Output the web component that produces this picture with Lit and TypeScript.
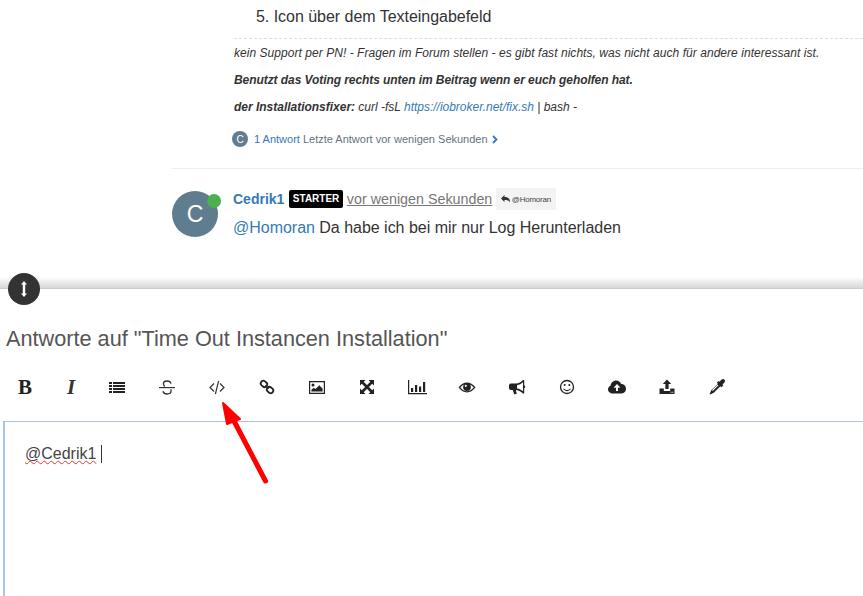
import { LitElement, html, css, svg } from "lit";
import { customElement } from "lit/decorators.js";

const icons = [
  svg`<text x="8" y="15" text-anchor="middle" class="tb">B</text>`,
  svg`<text x="8" y="15" text-anchor="middle" class="ti">I</text>`,
  svg`<path d="M0 3h3v2H0zM4 3h12v2H4zM0 6h3v2H0zM4 6h12v2H4zM0 9h3v2H0zM4 9h12v2H4zM0 12h3v2H0zM4 12h12v2H4z" fill="#222"/>`,
  svg`<path d="M0 8h16v1.200H0z" fill="#333"/><path d="M12 4.600C11.600 3 10 2 8.200 2 6 2 4.400 3 4.400 4.800c0 1 .5 1.900 1.400 2.600M11.700 10.400c.3.500.4.900.4 1.400 0 2-1.700 3.200-4 3.200-2 0-3.600-.8-4.200-2.800" fill="none" stroke="#333" stroke-width="1.300"/>`,
  svg`<path d="M5 4.500 1 8.500l4 4M11 4.500l4 4-4 4M9.600 1.800 6.400 15" fill="none" stroke="#333" stroke-width="1.200"/>`,
  svg`<g fill="none" stroke="#222" stroke-width="2" transform="translate(1 1) scale(.875)"><rect x="0.700" y="1.500" width="7.600" height="6" rx="2.800" transform="rotate(40 4.500 4.500)"/><rect x="7.700" y="8.500" width="7.600" height="6" rx="2.800" transform="rotate(40 11.500 11.500)"/><path d="M6 6.500l4 3.400"/></g>`,
  svg`<path fill-rule="evenodd" d="M0 2h16v13H0zM1.200 3.200v10.600h13.600V3.200z" fill="#222"/><circle cx="4" cy="6" r="1.500" fill="#222"/><path d="M2.400 12.600v-1.800l2.400-2 1.600 1.300 4-3.800 3.200 3.400v2.900z" fill="#222"/>`,
  svg`<path d="M1 1h5.500L1 6.500zM15 1v5.500L9.500 1zM1 15V9.500L6.500 15zM15 15H9.500L15 9.500z" fill="#222"/><path d="M3 3l10 10M13 3 3 13" stroke="#222" stroke-width="2.600"/>`,
  svg`<path d="M-1 1h1.200v13H18v1.200H-1z" fill="#222"/><path d="M2 9h2.200v4H2zM6 6h2.200v7H6zM10 7.500h2.200V13H10zM14 3h2.200v10H14z" fill="#222"/>`,
  svg`<path fill-rule="evenodd" d="M-.500 8.500C2 5.300 5 3.600 8 3.600s6 1.700 8.500 4.900C14 11.700 11 13.400 8 13.400S2 11.700-.500 8.500zM1.300 8.500C3.100 10.700 5.500 12.200 8 12.200s4.900-1.500 6.700-3.700C13.600 7.200 12.400 6.200 11.100 5.500c.5.700.8 1.600.8 2.500a3.900 3.900 0 0 1-7.800 0c0-.9.300-1.800.8-2.500C3.600 6.200 2.400 7.200 1.300 8.500z" fill="#222"/><circle cx="6.800" cy="6.800" r="1.100" fill="#fff"/>`,
  svg`<path fill-rule="evenodd" d="M14 1h1.200v5.200c.6.300 1 .8 1 1.500s-.4 1.200-1 1.500V14.500H14C12 12.700 9.800 11.500 7.500 11c-.5.200-.7.700-.5 1.200l.9 2.200-2.600 1-1.600-4.400H1.800C.8 11 0 10 0 9V6.500C0 5.400.8 4.500 1.800 4.500H7C9.800 4.500 12 3 14 1zM14 3.300C12.300 4.900 10.300 5.900 8 6.200v3.200c2.300.3 4.300 1.300 6 2.900z" fill="#222"/>`,
  svg`<circle cx="8" cy="8" r="6.500" fill="none" stroke="#222" stroke-width="1.300"/><circle cx="5.700" cy="6" r="1" fill="#222"/><circle cx="10.300" cy="6" r="1" fill="#222"/><path d="M4.500 9.700c1 1.400 2.100 1.900 3.500 1.900s2.500-.5 3.500-1.900" fill="none" stroke="#222" stroke-width="1.100"/>`,
  svg`<path fill-rule="evenodd" d="M3.800 14.500C1.300 14.500-1 12.800-1 10.300-1 8.600 0 7.300 1.500 6.700 1.800 4 4.300 1.500 7.200 1.500c2.200 0 4.100 1.300 5 3.500 2.800-.1 4.800 2.100 4.800 4.700 0 2.700-2.200 4.800-5 4.800zM8 5 4.600 8.800H7V12h2V8.800h2.400z" fill="#222"/>`,
  svg`<path d="M8 .5l4.200 4.400H9.600v5.100H6.400V4.900H3.800z" fill="#222"/><path fill-rule="evenodd" d="M.5 9.500h4.300V12h6.400V9.500h4.300V15H.5zM11.500 12.800v1h1v-1zM13.300 12.800v1h1v-1z" fill="#222"/>`,
  svg`<path d="M15.400.6c-.8-.8-2-.8-2.800 0L10.400 2.800 9.500 2 7.800 3.700l1 1L2.300 11.200c-.3.300-.5.700-.5 1.200L.6 14.800l.6.600 2.400-1.200c.5 0 .9-.2 1.200-.5l6.500-6.500 1 1L14.400 6.500l-.9-.9 1.900-2.200c.8-.8.800-2 0-2.800z" fill="#222"/><path d="M9.500 6.200 4 11.700h-.9v-.7l5.500-5.500z" fill="#fff"/>`,
];

@customElement("app-root")
export class AppRoot extends LitElement {
  static styles = css`
    :host { display: block; width: 863px; height: 596px; overflow: hidden; position: relative; background: #fff;
      font-family: "Liberation Sans", Arial, sans-serif; color: #333; }
    a { color: #337ab7; text-decoration: none; }
    .thread { height: 277px; padding-left: 172px; box-sizing: border-box; overflow: hidden; }
    .content { padding-left: 62px; }
    .li { font-size: 16px; line-height: 18px; padding: 8px 0 0 22px; height: 30px; box-sizing: border-box; color: #333; letter-spacing: -0.03px; }
    .sig { border-top: 1px dashed #ddd; margin-top: 8px; font-size: 12px; font-style: italic; color: #333; }
    .sig p { margin: 0; line-height: 17px; height: 27px; white-space: nowrap; }
    .sig p:first-child { padding-top: 6px; height: 33px; box-sizing: border-box; letter-spacing: 0.045px; }
    .sig p:nth-child(2) { letter-spacing: -0.07px; }
    .sig p:nth-child(3) { letter-spacing: -0.015px; }
    .replies { display: flex; align-items: center; gap: 4px; margin: 5px 0 0 -2px; height: 16px; font-size: 11px; color: #64727e; white-space: nowrap; }
    .replies span:nth-child(2) { margin-left: 2px; }
    .mini { width: 16px; height: 16px; border-radius: 50%; background: #5f7d8e; color: #fff; font-size: 10px; font-weight: 400; display: flex; align-items: center; justify-content: center; }
    hr { margin: 21px 0 0; border: 0; border-top: 1px solid #eee; }
    .post { display: flex; gap: 15px; margin-top: 22px; }
    .avatar { position: relative; width: 46px; height: 46px; border-radius: 50%; background: #5f7d8e; color: #fff; font-size: 23px; display: flex; align-items: center; justify-content: center; flex: none; }
    .dot { position: absolute; top: 3px; right: -3px; width: 14px; height: 14px; border-radius: 50%; background: #4caf50; }
    .meta { display: flex; align-items: center; height: 22px; margin-top: -3px; white-space: nowrap; }
    .name { font-size: 14px; font-weight: 700; color: #337ab7; }
    .badge { background: #000; color: #fff; font-size: 10px; font-weight: 700; border-radius: 2px; padding: 0 3.500px; height: 18px; line-height: 18px; margin: 0 4px 0 5px; }
    .time { font-size: 14.300px; color: #777; text-decoration: underline; }
    .to { display: flex; align-items: center; gap: 2px; background: #f3f3f3; height: 22px; padding: 0 5px; margin-left: 3.500px; font-size: 8px; letter-spacing: -0.25px; color: #444; }
    .text { font-size: 16px; line-height: 18px; margin-top: 9px; white-space: nowrap; color: #333; letter-spacing: -0.02px; }
    .composer { position: relative; }
    .bar { height: 11px; background: linear-gradient(#fff, #d6d6d6); border-bottom: 1px solid #ccc; }
    .handle { position: absolute; left: 8px; top: -4px; width: 32px; height: 32px; border-radius: 50%; background: #333; display: flex; align-items: center; justify-content: center; }
    h1 { margin: 0; padding: 38px 0 0 6px; font-size: 21.700px; line-height: 24px; font-weight: 400; color: #555; white-space: nowrap; }
    .toolbar { display: flex; margin-top: 20px; padding-left: 2px; height: 32px; align-items: center; }
    .tool { width: 50px; flex: none; display: flex; justify-content: center; }
    .tool.narrow { width: 46px; }
    .tool.gapped { margin-right: 2px; }
    .tool svg { width: 16px; height: 16px; overflow: visible; }
    .tb { font: 700 21px "Liberation Serif", serif; fill: #222; }
    .ti { font: italic 700 21px "Liberation Serif", serif; fill: #333; }
    .editor { margin: 18px 0 0 3px; height: 200px; box-sizing: border-box; border-top: 1px solid #a9c3ec; border-left: 2px solid #a9c3ec; padding: 23px 0 0 20px; font-size: 16px; line-height: 18px; color: #444; }
    .mention { text-decoration: underline wavy #e33; text-decoration-thickness: 1px; text-underline-offset: 1px; text-decoration-skip-ink: none; }
    .caret { display: inline-block; width: 1px; height: 18px; background: #333; margin-left: 5px; vertical-align: top; }
    .arrow { position: absolute; left: 215px; top: 395px; width: 60px; height: 95px; pointer-events: none; }
  `;

  render() {
    return html`
      <div class="thread">
        <div class="content">
          <div class="li">5. Icon über dem Texteingabefeld</div>
          <div class="sig">
            <p>kein Support per PN! - Fragen im Forum stellen - es gibt fast nichts, was nicht auch für andere interessant ist.</p>
            <p><b>Benutzt das Voting rechts unten im Beitrag wenn er euch geholfen hat.</b></p>
            <p><b>der Installationsfixer:</b> curl -fsL <a>https://iobroker.net/fix.sh</a> | bash -</p>
          </div>
          <div class="replies">
            <span class="mini">C</span>
            <span><a>1 Antwort</a> Letzte Antwort vor wenigen Sekunden</span>
            <svg width="6" height="9" viewBox="0 0 6 9"><path d="M1 1l3.500 3.500L1 8" fill="none" stroke="#337ab7" stroke-width="1.800"/></svg>
          </div>
        </div>
        <hr />
        <div class="post">
          <div class="avatar">C<span class="dot"></span></div>
          <div>
            <div class="meta">
              <span class="name">Cedrik1</span><span class="badge">STARTER</span><span class="time">vor wenigen Sekunden</span>
              <span class="to">
                <svg width="9" height="8" viewBox="0 0 9 8"><path d="M3.500 0v2C7 2 9 3.500 9 7.500 8 5.500 6.500 5 3.500 5v2L0 3.500z" fill="#333"/></svg>
                @Homoran
              </span>
            </div>
            <div class="text"><a>@Homoran</a> Da habe ich bei mir nur Log Herunterladen</div>
          </div>
        </div>
      </div>
      <div class="composer">
        <div class="bar"></div>
        <div class="handle">
          <svg width="8" height="16" viewBox="0 0 8 16"><path d="M4 0l3 3.500H5.200v9H7L4 16l-3-3.500h1.800v-9H1z" fill="#fff"/></svg>
        </div>
        <h1>Antworte auf "Time Out Instancen Installation"</h1>
        <div class="toolbar">
          ${icons.map((i, n) => html`<span class="tool ${n < 3 ? "narrow" : ""} ${n === 2 ? "gapped" : ""}"><svg viewBox="0 0 16 16">${i}</svg></span>`)}
        </div>
        <div class="editor"><span class="mention">@Cedrik1</span><span class="caret"></span></div>
      </div>
      <svg class="arrow" viewBox="0 0 60 95">
        <path d="M50.500 86 19 26" stroke="#f00" stroke-width="5" stroke-linecap="round" fill="none"/>
        <path d="M8 8 12 29 25 24z" fill="#f00" stroke="#f00" stroke-width="2" stroke-linejoin="round"/>
      </svg>
    `;
  }
}
